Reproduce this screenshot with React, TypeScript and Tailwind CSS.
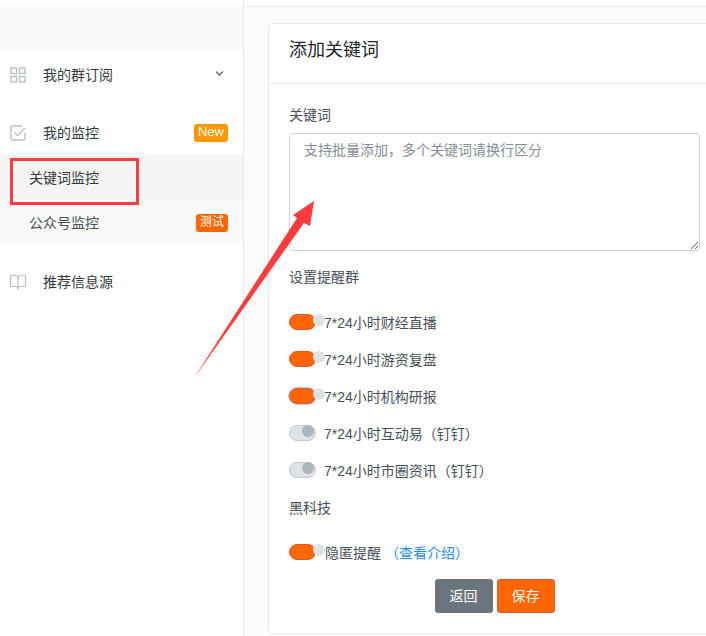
import React from "react";
import { BookOpen, ChevronDown } from "lucide-react";

const groups = [
  { name: "7*24小时财经直播", on: true, focused: false },
  { name: "7*24小时游资复盘", on: true, focused: false },
  { name: "7*24小时机构研报", on: true, focused: true },
  { name: "7*24小时互动易（钉钉）", on: false, focused: false },
  { name: "7*24小时市圈资讯（钉钉）", on: false, focused: false },
];

const Toggle = ({ on, focused }: { on: boolean; focused?: boolean }) => (
  <span
    className={`relative block w-[27px] h-4 shrink-0 -translate-y-px rounded-full border ${
      on ? "bg-[#ff6600] border-[#e8572a]" : "bg-[#dee2e6] border-[#c3c9cf]"
    } ${focused ? "ring-1 ring-[#c3d4f7]" : ""}`}
  >
    {on ? (
      <span className="absolute left-[23px] top-[-1px] w-3 h-3 rounded-full bg-[#dee2e6]" />
    ) : (
      <span className="absolute left-[12px] top-[-1px] w-3 h-3 rounded-full bg-[#adb5bd]" />
    )}
  </span>
);

const GridIcon = () => (
  <svg width="16" height="16" viewBox="0 0 16 16" fill="none" stroke="#b6bec8" strokeWidth="1.4" className="shrink-0">
    <rect x="1" y="1" width="5.5" height="5.5" />
    <rect x="9.5" y="1" width="5.5" height="5.5" />
    <rect x="1" y="9.5" width="5.5" height="5.5" />
    <rect x="9.5" y="9.5" width="5.5" height="5.5" />
  </svg>
);

const CheckIcon = () => (
  <svg width="16" height="16" viewBox="0 0 16 16" fill="none" stroke="#b6bec8" strokeWidth="1.3" className="shrink-0">
    <path d="M12.5 1H2a1.2 1.2 0 0 0-1 1v12a1.2 1.2 0 0 0 1 1h12a1.2 1.2 0 0 0 1-1V8" />
    <path d="M4.5 7.5l3 3L15 3" />
  </svg>
);

export default function App() {
  return (
    <div className="relative flex w-[706px] h-[636px] overflow-hidden bg-white text-sm text-[#495057] font-['Liberation_Sans','Noto_Sans_CJK_SC',sans-serif]">
      {/* Sidebar */}
      <aside className="w-[244px] shrink-0 border-r border-[#e9e9f2] pt-[5px]">
        <div className="h-[45px] bg-[#f9f9fa]" />
        <div className="flex items-center h-[50px] pl-[10px] pr-[17px] text-[#343a40]">
          <GridIcon />
          <span className="ml-[17px] flex-1">我的群订阅</span>
          <ChevronDown size={13} strokeWidth={2.2} className="text-[#495057] -mt-[4px]" />
        </div>
        <div className="flex items-center h-[45px] mt-[10px] pl-[10px] pr-[15px] text-[#343a40]">
          <CheckIcon />
          <span className="ml-[17px] flex-1">我的监控</span>
          <span className="flex items-center justify-center w-[34px] h-[18px] rounded-[3px] bg-[#ff9800] text-white text-[13px]">
            New
          </span>
        </div>
        <div className="flex items-center h-[45px] pl-[29px] bg-[#f4f4f5] text-[#343a40]">关键词监控</div>
        <div className="flex items-center h-[45px] pl-[29px] pr-[15px] bg-[#f9f9fa]">
          <span className="flex-1">公众号监控</span>
          <span className="flex items-center justify-center w-8 h-[18px] rounded-[3px] bg-[#ff6600] text-white text-[12px]">
            测试
          </span>
        </div>
        <div className="flex items-center h-[45px] mt-[14px] pl-[9px] text-[#343a40]">
          <BookOpen size={18} strokeWidth={1.5} className="text-[#b6bec8]" />
          <span className="ml-[16px]">推荐信息源</span>
        </div>
      </aside>

      {/* Main */}
      <main className="flex-1 min-w-0 pt-[6px] bg-white">
        <div className="h-[630px] border-t border-[#e9e9f2] bg-[#fafbfc] pt-4 pl-6">
          <section className="w-[453px] h-[611px] rounded-[4px] border border-[#e6e8ee] bg-white">
            <div className="flex items-start h-[60px] pl-5 pt-[13px] border-b border-[#e9ecef] text-[18px] leading-[27px] text-[#212529]">
              添加关键词
            </div>
            <div className="px-5 pt-[21px]">
              <label className="block leading-[21px]">关键词</label>
              <textarea
                placeholder="支持批量添加，多个关键词请换行区分"
                className="block w-[411px] h-[118px] mt-[7px] px-[14px] py-[6px] rounded-[4px] border border-[#ced4da] text-sm leading-[21px] placeholder:text-[#868e96] outline-none"
              />
              <div className="mt-[16px] leading-[21px]">设置提醒群</div>
              <div className="mt-[16px]">
                {groups.map((g) => (
                  <div key={g.name} className="flex items-center h-[37px]">
                    <Toggle on={g.on} focused={g.focused} />
                    <span className="ml-2">{g.name}</span>
                  </div>
                ))}
              </div>
              <div className="mt-[9px] leading-[21px]">黑科技</div>
              <div className="flex items-center h-[37px] mt-[15px]">
                <Toggle on />
                <span className="ml-[9px]">隐匿提醒</span>
                <a className="ml-[4px] text-[#1e90ff]">（查看介绍）</a>
              </div>
              <div className="flex gap-1 justify-center w-[411px] mt-[8px]">
                <button className="w-[58px] h-[34px] rounded-[3px] bg-[#6c757d] text-white">返回</button>
                <button className="w-[58px] h-[34px] rounded-[3px] border border-[#e8572a] bg-[#ff6600] text-white">保存</button>
              </div>
            </div>
          </section>
        </div>
      </main>

      {/* Annotation: red box and arrow over the screenshot */}
      <div className="absolute left-[10px] top-[158px] w-[129px] h-[47px] border-[3px] border-[#ff3b3b]" />
      <svg className="absolute left-0 top-0 pointer-events-none" width="706" height="636">
        <polygon points="194,378 297,218 293,215 314,201 310,226 304,223" fill="#ff3b3b" />
      </svg>
    </div>
  );
}
